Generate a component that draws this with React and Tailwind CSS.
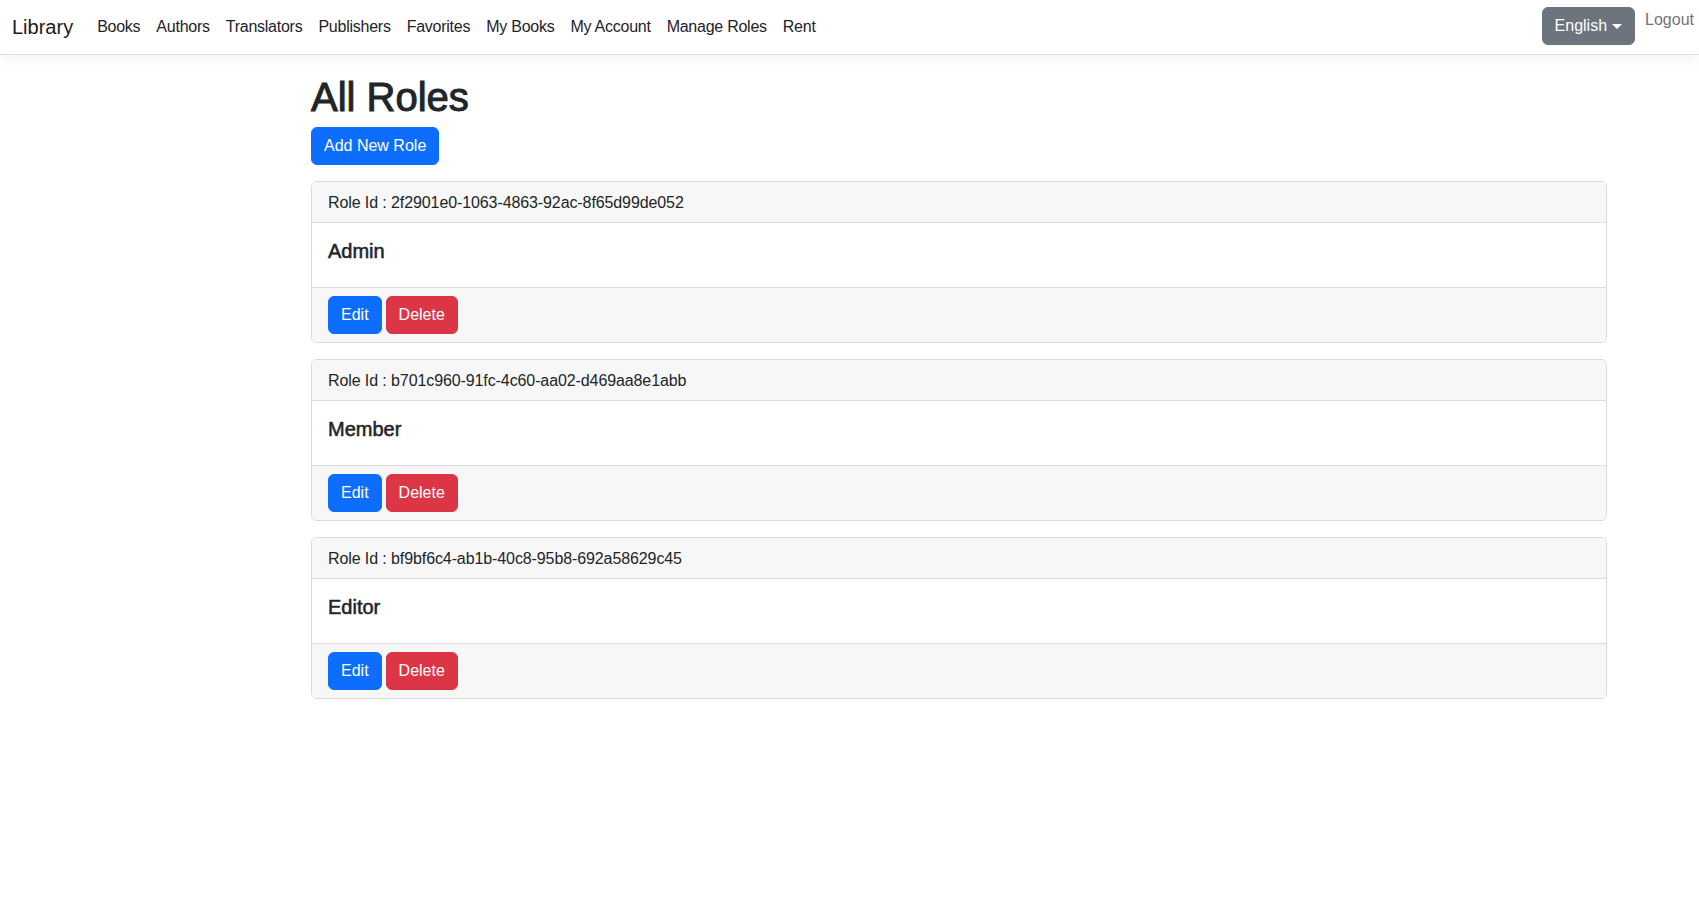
import React from 'react';

const navLinks = ['Books', 'Authors', 'Translators', 'Publishers', 'Favorites', 'My Books', 'My Account', 'Manage Roles', 'Rent'];

const roles = [
    { id: '2f2901e0-1063-4863-92ac-8f65d99de052', name: 'Admin' },
    { id: 'b701c960-91fc-4c60-aa02-d469aa8e1abb', name: 'Member' },
    { id: 'bf9bf6c4-ab1b-40c8-95b8-692a58629c45', name: 'Editor' },
];

function RoleCard({ role }) {
    return (
        <div className="mb-4 rounded-md border border-[#dadada] overflow-hidden">
            <div className="bg-[#f7f7f7] border-b border-[#dadada] px-4 pt-[9px] pb-[7px] leading-6 tracking-[-0.1px]">
                Role Id : {role.id}
            </div>
            <div className="bg-white p-4">
                <h5 className="text-[20px] leading-6 font-normal [-webkit-text-stroke:0.55px] mb-2">{role.name}</h5>
            </div>
            <div className="bg-[#f7f7f7] border-t border-[#dadada] px-4 py-2 flex gap-1">
                <button className="bg-[#0d6efd] text-white border border-[#0d6efd] rounded-md px-3 py-1.5 leading-6">
                    Edit
                </button>
                <button className="bg-[#dc3545] text-white border border-[#dc3545] rounded-md px-3 py-1.5 leading-6">
                    Delete
                </button>
            </div>
        </div>
    );
}

export default function App() {
    return (
        <div
            className="min-h-screen bg-white text-[#212529] text-base"
            style={{ fontFamily: '"Liberation Sans", Arial, sans-serif' }}
        >
            <nav className="h-[55px] bg-white border-b border-[#e0dfe8] shadow-[0_6px_12px_rgba(0,0,0,0.04)] flex items-start pl-3 pr-[5px]">
                <a className="text-[20px] leading-[30px] mt-3 mr-4 text-[#1c1c1c]">Library</a>
                <ul className="flex mt-[15px]">
                    {navLinks.map((link) => (
                        <li key={link} className="px-2 leading-6 text-[#1f2328] tracking-[-0.25px]">
                            {link}
                        </li>
                    ))}
                </ul>
                <div className="ml-auto flex items-start pt-[7px]">
                    <button className="flex items-center bg-[#6c757d] text-white rounded-md border border-[#6c757d] px-3 py-1.5 leading-6">
                        English
                        <span className="ml-[5px] w-0 h-0 border-t-[5px] border-t-white border-x-[5px] border-x-transparent" />
                    </button>
                    <span className="ml-[10px] text-[#737373] leading-6 mt-[1px]">Logout</span>
                </div>
            </nav>
            <main className="ml-[311px] w-[1296px] pt-[18px]">
                <h1 className="text-[40px] leading-[48px] font-normal [-webkit-text-stroke:1px] mb-[6px]">All Roles</h1>
                <button className="bg-[#0d6efd] text-white border border-[#0d6efd] rounded-md px-3 py-1.5 leading-6 mb-4">
                    Add New Role
                </button>
                {roles.map((role) => (
                    <RoleCard key={role.id} role={role} />
                ))}
            </main>
        </div>
    );
}
